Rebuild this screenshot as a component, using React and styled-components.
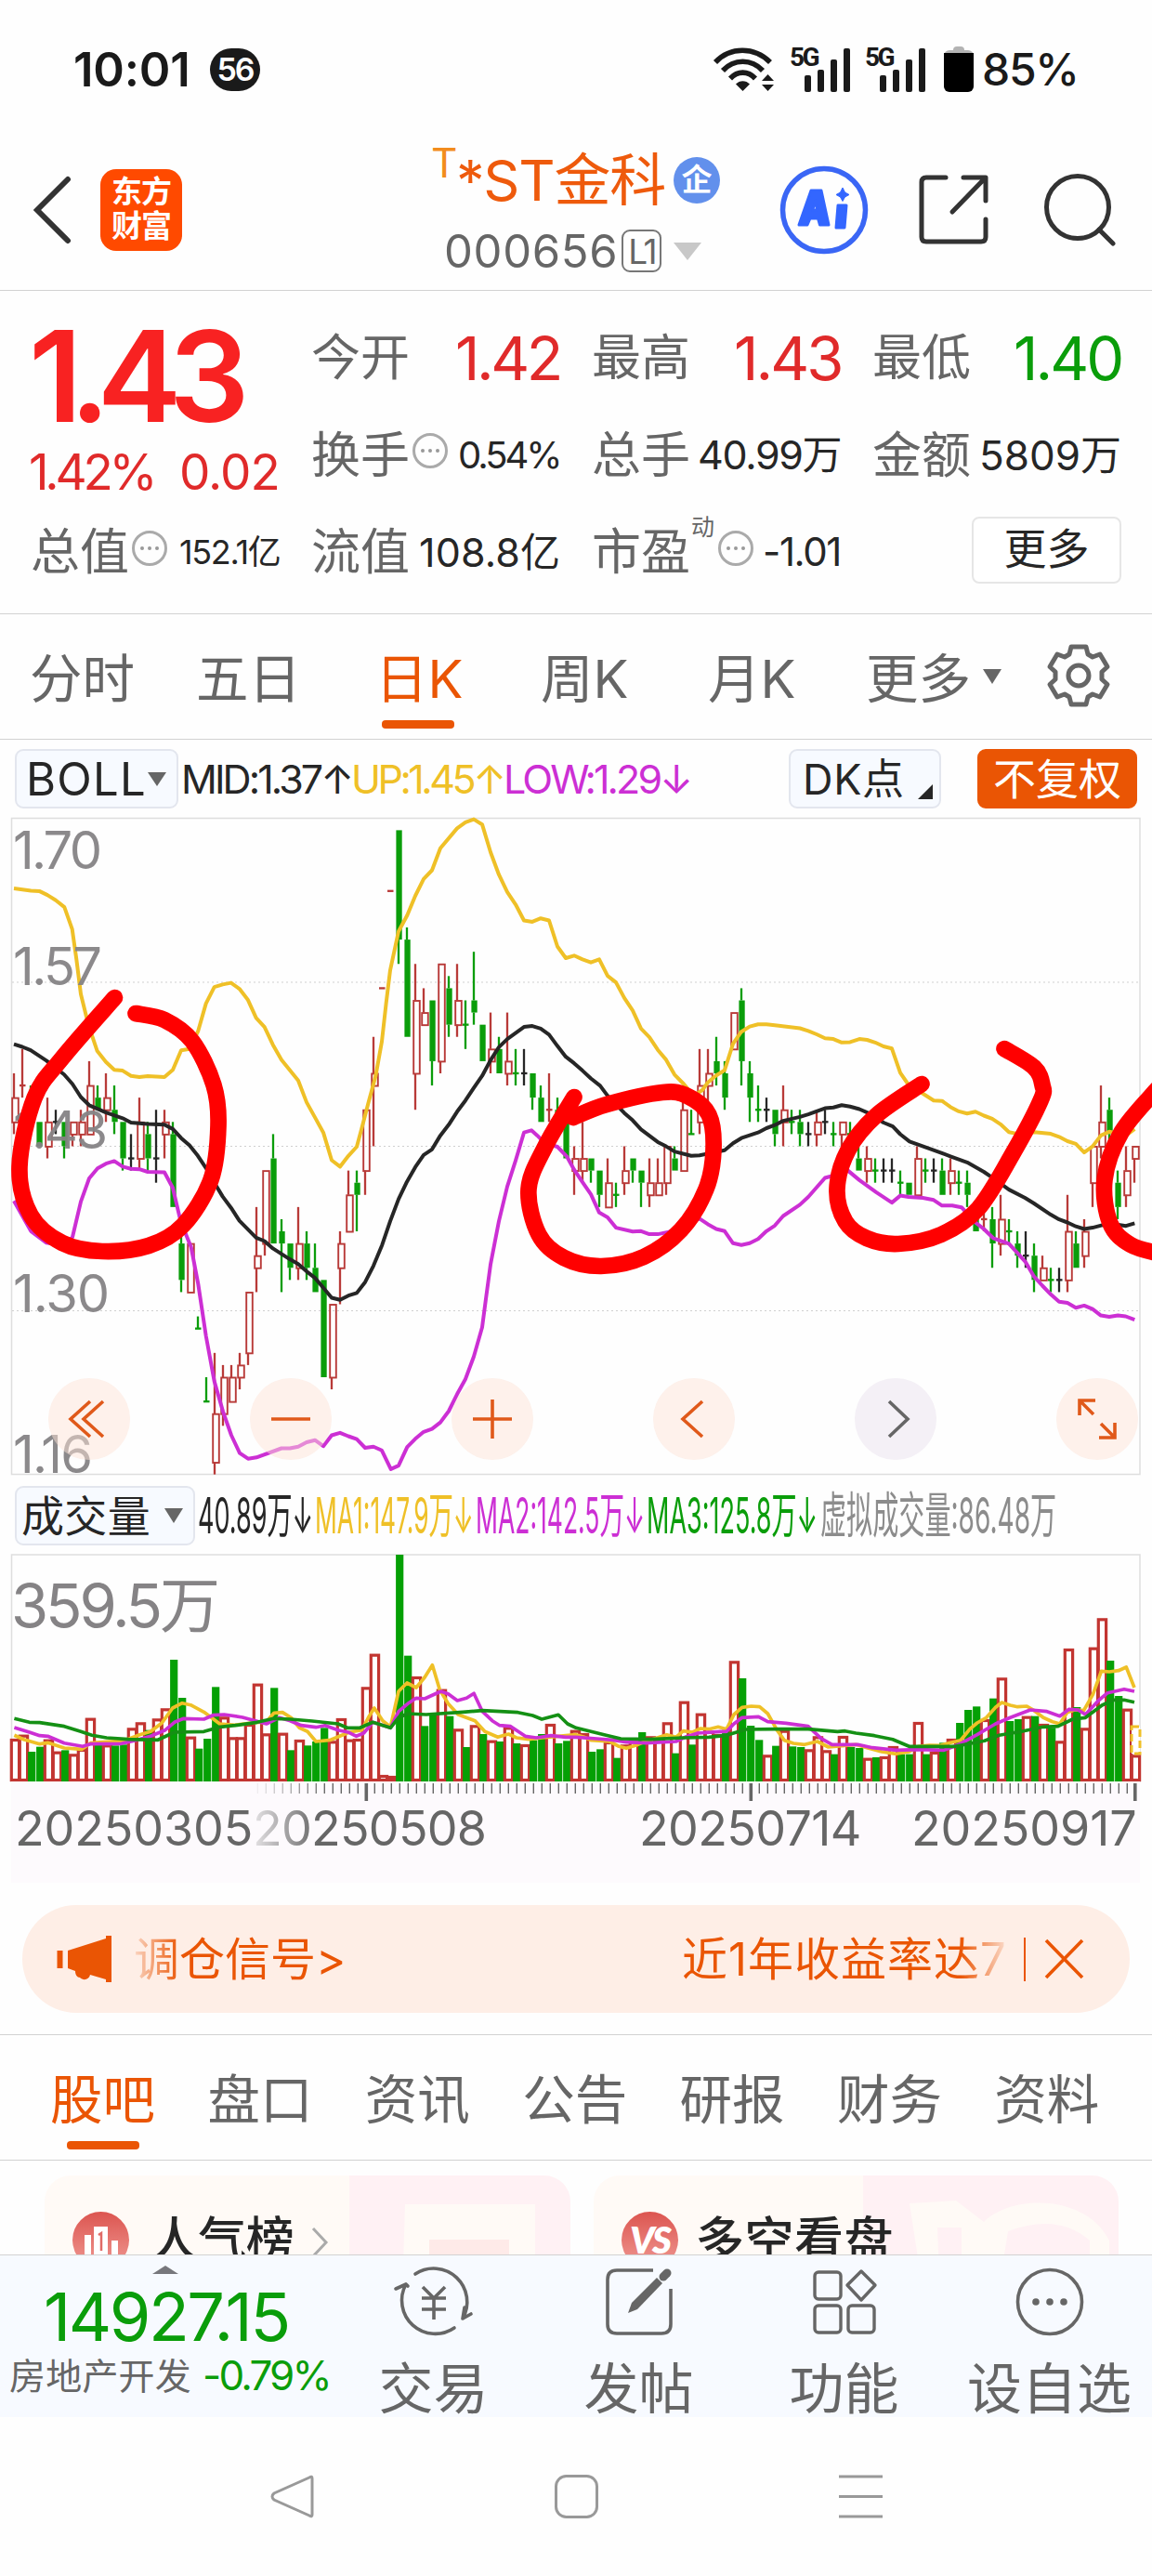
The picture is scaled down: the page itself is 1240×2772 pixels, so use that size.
import React, { useLayoutEffect, useRef, useState } from 'react';
import styled, { createGlobalStyle } from 'styled-components';

const FONT = `Inter, "Noto Sans CJK SC", sans-serif`;

const ORANGE = '#ea5504';
const RED = '#c23531';
const GREEN = '#0a9d0a';
const YELLOW = '#efc027';
const PURPLE = '#cc2fd4';
const INK = '#262626';
const GREY = '#666666';

const GlobalStyle = createGlobalStyle`
    * { box-sizing: border-box; }
    body {
        margin: 0;
        background: #fff;
        font-family: ${FONT};
        color: ${INK};
    }
    svg { display: block; flex-shrink: 0; overflow: visible; }
`;

const Page = styled.div`
    width: 1240px;
    height: 2772px;
    overflow: hidden;
    background: #fefefe;
    display: flex;
    flex-direction: column;
`;

/* ---------- text ---------- */

const TextBox = styled.span`
    display: inline-block;
    flex-shrink: 0;
    width: ${(p) => p.$w}px;
    margin-left: ${(p) => p.$ml || 0}px;
    font-size: ${(p) => p.$size}px;
    font-weight: ${(p) => p.$weight || 400};
    line-height: 1;
    color: ${(p) => p.$color || 'inherit'};
    white-space: pre;
`;

const TextInner = styled.span`
    display: inline-block;
    transform-origin: left center;
`;

// fits a string to a fixed width: tightens the tracking, or squeezes the glyphs
function Fit({ w, ml, size, weight, color, squeeze, children }) {
    const ref = useRef(null);
    const [fit, setFit] = useState({});

    useLayoutEffect(() => {
        const natural = ref.current.offsetWidth;
        if (squeeze) setFit({ transform: `scaleX(${w / natural})` });
        else setFit({ letterSpacing: `${(w - natural) / String(children).length}px` });
    }, []);

    return (
        <TextBox $w={w} $ml={ml} $size={size} $weight={weight} $color={color}>
            <TextInner ref={ref} style={fit}>{children}</TextInner>
        </TextBox>
    );
}

const Triangle = styled.i`
    flex-shrink: 0;
    margin-left: ${(p) => p.$ml || 0}px;
    border-left: ${(p) => p.$half}px solid transparent;
    border-right: ${(p) => p.$half}px solid transparent;
    border-top: ${(p) => p.$h}px solid ${(p) => p.$color};
`;

/* ---------- status bar ---------- */

const StatusBar = styled.div`
    height: 125px;
    padding: 24px 0 0 79px;
    display: flex;
    align-items: center;
    color: #1a1a1a;
    flex-shrink: 0;
`;

const CountBadge = styled.div`
    width: 54px;
    height: 46px;
    margin-left: 21px;
    border-radius: 23px;
    background: #1a1a1a;
    color: #fff;
    font-size: 34px;
    font-weight: 600;
    letter-spacing: -2px;
    line-height: 46px;
    text-align: center;
`;

const StatusIcons = styled.div`
    display: flex;
    align-items: center;
    margin-left: 488px;
`;

const Signal = styled.div`
    position: relative;
    width: 65px;
    height: 49px;
    margin-left: ${(p) => p.$ml}px;
    display: flex;
    align-items: flex-end;
    justify-content: flex-end;
    gap: 7px;
`;

const SignalTag = styled.span`
    position: absolute;
    left: 0;
    top: -2px;
    font-family: Roboto, sans-serif;
    font-size: 28px;
    font-weight: 700;
    line-height: 28px;
    letter-spacing: -2.5px;
`;

const SignalBar = styled.i`
    width: 7px;
    height: ${(p) => p.$h}px;
    border-radius: 2px;
    background: #1a1a1a;
`;

function SignalIcon({ ml }) {
    return (
        <Signal $ml={ml}>
            <SignalTag>5G</SignalTag>
            {[18, 24, 35, 47].map((h) => <SignalBar key={h} $h={h} />)}
        </Signal>
    );
}

function WifiIcon() {
    return (
        <svg width="66" height="48" viewBox="0 0 66 48" fill="none" stroke="#1a1a1a" strokeWidth="5.6">
            <path d="M2 16 C18 -1 44 -1 61 16" />
            <path d="M10 25 C22 12 41 12 53 25" />
            <path d="M18 33.500 C26 25 37 25 45 33.500" />
            <path d="M31.500 47 L24 39.500 C28 35 35 35 39 39.500 Z" fill="#1a1a1a" stroke="none" />
            <path d="M58.500 29 L65 36 H52 Z M58.500 47 L65 40 H52 Z" fill="#1a1a1a" stroke="none" />
        </svg>
    );
}

function BatteryIcon() {
    return (
        <svg width="32" height="50" viewBox="0 0 32 50">
            <rect x="10" y="0" width="12" height="8" rx="4" fill="#b3b3b3" />
            <rect x="0" y="4" width="32" height="18" rx="6" fill="#b3b3b3" />
            <path d="M0 7 H32 V43 a6 6 0 0 1 -6 6 H6 a6 6 0 0 1 -6 -6 Z" fill="#000" />
        </svg>
    );
}

const BatteryWrap = styled.div`
    margin: 0 9px 0 20px;
`;

/* ---------- header ---------- */

const Header = styled.header`
    height: 188px;
    padding: 14px 0 0 36px;
    border-bottom: 1px solid #d2d2d2;
    display: flex;
    align-items: center;
    flex-shrink: 0;
`;

const AppBadge = styled.div`
    width: 88px;
    height: 88px;
    margin-left: 33px;
    border-radius: 17px;
    background: #ff4a00;
    color: #fff;
    font-size: 33px;
    font-weight: 600;
    line-height: 37px;
    padding-top: 6px;
    letter-spacing: -1px;
    text-align: center;
`;

const TitleBlock = styled.div`
    width: 312px;
    height: 173px;
    margin-left: 268px;
    padding-top: 17px;
`;

const TitleRow = styled.div`
    height: 76px;
    display: flex;
    align-items: center;
`;

const TitleMark = styled.sup`
    width: 27px;
    font-size: 44px;
    line-height: 44px;
    color: #f28c1e;
    align-self: flex-start;
    margin-top: -3px;
`;

const CompanyTag = styled.div`
    width: 50px;
    height: 50px;
    margin-left: 9px;
    border-radius: 25px;
    background: #6290ec;
    color: #fff;
    font-size: 33px;
    font-weight: 700;
    line-height: 49px;
    text-align: center;
`;

const CodeRow = styled(TitleRow)`
    padding-left: 12px;
    color: ${GREY};
`;

const LevelTag = styled.div`
    width: 43px;
    height: 46px;
    margin-left: 4px;
    border: 2px solid #777;
    border-radius: 9px;
    font-size: 37px;
    line-height: 43px;
    letter-spacing: -3px;
    text-align: center;
`;

const HeaderIcons = styled.div`
    display: flex;
    align-items: center;
    gap: 54px;
    margin-left: 63px;

    svg:last-child { margin-left: 5px; }
`;

function AiIcon() {
    return (
        <svg width="96" height="96" viewBox="0 0 96 96">
            <circle cx="48" cy="48" r="44.500" fill="none" stroke="#3a66f5" strokeWidth="5.500" />
            <g fill="#3366ff" stroke="#3366ff" strokeWidth="3" strokeLinejoin="round">
                <path fillRule="evenodd" d="M34 27 H45 L53 64 H43.500 L41.500 57 H33 L30 64 H21 Z M39 38 L35.500 48 H40.500 Z" />
                <path d="M63 43 H72 L70 67 H61 Z" />
                <path d="M68 24 L70.500 29 L75 31.500 L70.500 34 L68 38.500 L65.500 34 L61 31.500 L65.500 29 Z" strokeWidth="1" />
            </g>
        </svg>
    );
}

function ShareIcon() {
    return (
        <svg width="76" height="76" viewBox="0 0 76 76" fill="none" stroke="#333" strokeWidth="5" strokeLinecap="round" strokeLinejoin="round">
            <path d="M29 3 H8 Q3 3 3 8 V67 Q3 72 8 72 H67 Q72 72 72 67 V48" />
            <path d="M48 3 H72 V28 M71 4 L36 40" />
        </svg>
    );
}

function SearchIcon() {
    return (
        <svg width="78" height="78" viewBox="0 0 78 78" fill="none" stroke="#333" strokeWidth="5" strokeLinecap="round">
            <circle cx="36" cy="36" r="33.500" />
            <path d="M59 60 L74 75" />
        </svg>
    );
}

/* ---------- quote ---------- */

const Quote = styled.section`
    height: 348px;
    padding: 20px 0 0 33px;
    border-bottom: 1px solid #d2d2d2;
    display: grid;
    grid-template-columns: repeat(4, 268px);
    grid-template-rows: repeat(3, 104.5px);
    column-gap: 34px;
    flex-shrink: 0;
`;

const PriceCell = styled.div`
    grid-row: span 2;
    color: #f82222;
`;

const PriceRow = styled.div`
    height: ${(p) => p.$h}px;
    display: flex;
    align-items: center;
`;

const Cell = styled.div`
    display: flex;
    align-items: center;
    justify-content: space-between;
    color: ${GREY};
`;

const CellLabel = styled.div`
    display: flex;
    align-items: center;
    font-size: 53px;
    line-height: 64px;
`;

const CellNote = styled.sup`
    font-size: 25px;
    line-height: 25px;
    margin: -54px 0 0 1px;
`;

const InfoDot = styled.i`
    width: 38px;
    height: 38px;
    margin: -9px 0 0 ${(p) => p.$ml}px;
    border: 3px solid #aaa;
    border-radius: 19px;
    display: flex;
    align-items: center;
    justify-content: center;
    gap: 4px;

    &::before, &::after, span {
        content: '';
        width: 4px;
        height: 4px;
        border-radius: 2px;
        background: #999;
    }
`;

const MoreButton = styled.button`
    justify-self: end;
    align-self: center;
    width: 161px;
    height: 72px;
    margin-top: -4px;
    border: 2px solid #e6e6e6;
    border-radius: 8px;
    background: #fff;
    color: ${INK};
    font: 400 46px/60px ${FONT};
    padding: 0 0 4px;
`;

const QUOTE_CELLS = [
    { label: '今开', value: '1.42', w: 113, size: 65, color: '#e02a2a' },
    { label: '最高', value: '1.43', w: 115, size: 65, color: '#e02a2a' },
    { label: '最低', value: '1.40', w: 116, size: 65, color: GREEN },
    { label: '换手', value: '0.54%', w: 110, size: 40, dot: true },
    { label: '总手', value: '40.99万', w: 154, size: 43 },
    { label: '金额', value: '5809万', w: 153, size: 44 },
    { label: '总值', value: '152.1亿', w: 108, size: 36, dot: true },
    { label: '流值', value: '108.8亿', w: 152, size: 43 },
    { label: '市盈', value: '-1.01', w: 84, size: 42, dot: true, note: '动' },
];

function QuotePanel() {
    return (
        <Quote>
            <PriceCell>
                <PriceRow $h={144}><Fit w={224} ml={-2} size={136} weight={600}>1.43</Fit></PriceRow>
                <PriceRow $h={62}>
                    <Fit w={134} ml={-2} size={53} color="#e02a2a">1.42%</Fit>
                    <Fit w={108} ml={28} size={53} color="#e02a2a">0.02</Fit>
                </PriceRow>
            </PriceCell>
            {QUOTE_CELLS.map((c) => (
                <Cell key={c.label}>
                    <CellLabel>
                        {c.label}
                        {c.note && <CellNote>{c.note}</CellNote>}
                        {c.dot && <InfoDot $ml={c.note ? 4 : 3}><span /></InfoDot>}
                    </CellLabel>
                    <Fit w={c.w} size={c.size} color={c.color || INK}>{c.value}</Fit>
                </Cell>
            ))}
            <MoreButton>更多</MoreButton>
        </Quote>
    );
}

/* ---------- period tabs ---------- */

const PeriodTabs = styled.nav`
    height: 135px;
    border-bottom: 1px solid #d2d2d2;
    padding-left: 32px;
    display: flex;
    align-items: center;
    flex-shrink: 0;
`;

const Period = styled.div`
    position: relative;
    height: 134px;
    width: ${(p) => p.$w}px;
    font-size: 56.5px;
    line-height: 140px;
    white-space: nowrap;
    color: ${(p) => (p.$active ? ORANGE : GREY)};
`;

const Underline = styled.i`
    position: absolute;
    left: ${(p) => p.$left}px;
    bottom: 11px;
    width: 78px;
    height: 9px;
    border-radius: 4px;
    background: ${ORANGE};
`;

const PERIODS = [
    ['分时', 179],
    ['五日', 193],
    ['日K', 178],
    ['周K', 180],
    ['月K', 170],
    ['更多', 126],
];

function GearIcon() {
    return (
        <svg width="68" height="68" viewBox="-34 -34 68 68" fill="none" stroke={GREY} strokeWidth="5" strokeLinejoin="round">
            <path d="M-8 -31 H8 L10 -23 L15 -20 L23 -23 L31 -9.500 L25 -4 V4 L31 9.500 L23 23 L15 20 L10 23 L8 31 H-8 L-10 23 L-15 20 L-23 23 L-31 9.500 L-25 4 V-4 L-31 -9.500 L-23 -23 L-15 -20 L-10 -23 Z" />
            <circle r="11" />
        </svg>
    );
}

const GearWrap = styled.div`
    margin: -2px 0 0 49px;
`;

/* ---------- indicator rows ---------- */

const IndicatorRow = styled.div`
    height: ${(p) => p.$h}px;
    padding: ${(p) => p.$pad};
    display: flex;
    align-items: center;
    flex-shrink: 0;
`;

const Chip = styled.div`
    position: relative;
    width: ${(p) => p.$w}px;
    height: 64px;
    margin-left: ${(p) => p.$ml || 0}px;
    padding-left: ${(p) => p.$pl}px;
    border: 2px solid ${(p) => (p.$solid ? ORANGE : '#e3e6ee')};
    border-radius: 9px;
    background: ${(p) => (p.$solid ? ORANGE : '#f7faff')};
    color: ${(p) => (p.$solid ? '#fff' : INK)};
    display: flex;
    align-items: center;
    flex-shrink: 0;
`;

const ChipCorner = styled.i`
    position: absolute;
    right: 7px;
    bottom: 8px;
    border-left: 16px solid transparent;
    border-bottom: 16px solid ${INK};
`;

/* ---------- price chart ---------- */

// one entry per day: colour, high, body top, body bottom, low, in cents below 1.70
const CANDLES = `r21,23,25,26 r19,22,22,23 g22,23,25,25 g25,25,27,27 r23,25,27,28 k24,25,25,26 g25,25,27,28 r25,25,26,27 r24,25,26,27
r20,22,26,26 g22,23,24,24 r21,23,24,25 g22,24,25,26 g25,25,28,29 k26,28,28,29 r23,25,28,29 g25,26,28,29 k24,28,28,30
r24,25,26,28 g25,26,32,32 g34,35,38,39 r35,35,39,39 g41,42,42,42 g46,48,48,48 r44,49,53,54 r45,46,49,50 r45,46,48,48
r44,45,46,47 r39,39,44,45 r32,36,37,39 r29,29,35,36 g26,28,35,35 g33,34,35,39 g35,35,37,38 r32,35,37,38 g34,35,37,38
g35,37,39,39 g38,38,46,46 r40,40,46,47 r34,35,37,40 r29,31,34,34 g29,30,31,34 r24,24,29,31 r18,21,22,27 r14,14,14,14
r6,6,6,6 g1,1,10,12 g9,10,18,18 r12,15,21,24 r14,16,17,17 g15,15,20,22 r12,12,20,21 g13,14,17,18 r12,15,17,18
g15,17,17,19 g11,15,16,17 g17,17,20,20 r16,19,20,21 g18,19,21,21 r16,20,21,22 g19,21,21,22 k19,21,21,22 g21,21,23,24
g22,23,25,25 r21,24,24,25 g23,24,25,25 g25,25,28,28 r27,28,29,31 r25,28,29,30 g28,28,29,30 g29,29,31,32 r28,30,32,32
g30,31,31,32 r27,29,30,31 g28,28,29,30 g29,29,30,32 r28,30,31,32 r28,30,31,31 r27,27,30,31 g27,28,29,29 r22,24,29,29
g24,26,26,26 r19,22,25,26 r19,21,22,24 g18,20,21,22 g20,21,23,24 r16,16,19,19 g14,15,20,22 g20,21,23,25 g22,24,24,25
k23,24,24,25 g24,24,26,27 r22,24,25,27 g24,25,25,26 g24,25,26,27 k25,26,26,27 r24,25,26,27 k24,25,25,26 g25,26,26,27
r25,25,26,27 g25,26,26,27 g27,28,29,29 r27,28,29,30 g28,29,29,30 k28,29,29,30 k28,29,29,30 g29,30,30,31 g30,30,31,31
r27,28,31,31 g28,29,29,30 k28,29,29,30 g28,29,31,31 r28,29,30,31 g29,30,30,31 g29,30,31,32 g33,33,34,34 r32,33,33,34
g32,33,35,37 r31,33,35,36 g33,34,34,35 g34,35,36,37 k34,36,36,37 g35,36,38,39 r36,37,38,38 g37,38,38,39 k37,38,38,39
r31,34,38,39 g34,35,37,37 r33,34,36,37 r27,27,30,32 r22,25,27,28 g23,24,26,28 g29,30,32,33 r27,29,31,32 r27,27,28,30`
    .split(/\s+/)
    .map((d) => [d[0], ...d.slice(1).split(',').map(Number)]);

const UP = '45,186 100,191 127,192 153,201 180,213 208,229 233,280 247,350 261,430 285,500 314,562 342,587 369,605 396,607 423,619 450,622 477,620 531,622 558,605 585,560 612,557 640,515 665,452 692,414 719,408 746,404 773,418 800,443 827,485 854,506 881,547 909,582 963,630 990,680 1017,715 1044,750 1071,814 1098,829 1125,804 1152,783 1170,735 1190,680 1213,620 1233,540 1247,450 1260,375 1287,285 1315,248 1341,203 1368,164 1395,144 1422,93 1476,47 1503,33 1530,26 1557,38 1584,102 1611,154 1638,194 1665,223 1692,260 1719,263 1746,255 1773,260 1800,320 1827,347 1854,341 1881,350 1908,357 1935,350 1962,388 1989,403 2016,439 2043,468 2070,510 2097,530 2124,559 2151,582 2178,616 2208,638 2240,665 2268,652 2286,634 2313,618 2340,606 2367,545 2394,517 2421,505 2448,500 2475,500 2502,502 2583,509 2610,515 2637,523 2664,532 2691,534 2718,542 2745,541 2775,534 2800,536 2826,542 2853,551 2880,556 2907,612 2934,640 2975,658 3015,676 3042,677 3069,691 3096,701 3123,706 3150,702 3177,711 3204,718 3231,731 3258,749 3285,753 3340,749 3393,753 3420,760 3447,770 3474,776 3501,796 3528,782 3555,757 3582,748 3610,752 3640,755 3664,742';
const MID = '45,546 72,552 99,560 150,584 207,616 234,638 261,668 288,687 342,704 396,717 423,727 477,730 531,732 558,742 585,763 612,780 639,804 666,833 692,866 719,898 746,924 773,954 827,993 854,1001 881,1018 936,1043 963,1054 990,1071 1017,1086 1044,1109 1071,1132 1098,1137 1125,1127 1152,1121 1179,1096 1206,1058 1234,1010 1260,955 1287,904 1314,864 1341,830 1368,802 1395,789 1422,757 1449,732 1476,702 1503,676 1530,647 1557,619 1584,583 1611,553 1638,534 1665,520 1692,506 1719,504 1746,510 1773,524 1800,550 1827,575 1854,590 1881,607 1908,625 1938,642 1962,665 2016,705 2043,722 2070,743 2124,772 2151,782 2178,794 2232,804 2259,803 2340,791 2367,775 2394,763 2448,750 2475,740 2502,733 2529,723 2583,714 2610,708 2664,694 2691,692 2718,687 2745,690 2775,696 2810,707 2853,727 2883,736 2907,754 2937,771 3000,787 3069,805 3123,819 3177,841 3204,854 3258,882 3310,901 3339,914 3393,940 3420,951 3447,958 3474,967 3501,973 3528,970 3582,960 3636,966 3664,960';
const LOW = '45,908 70,940 100,978 150,1005 210,1012 234,992 261,910 288,856 315,833 342,822 369,816 396,829 423,834 450,835 477,841 531,842 558,878 580,945 600,985 617,1015 640,1100 665,1220 692,1325 720,1395 747,1450 774,1491 801,1504 828,1501 909,1480 936,1480 963,1476 990,1466 1017,1461 1044,1475 1071,1450 1098,1444 1125,1452 1152,1459 1179,1479 1206,1476 1233,1485 1262,1528 1287,1520 1315,1477 1341,1458 1368,1442 1395,1435 1422,1420 1449,1394 1476,1355 1503,1320 1530,1268 1557,1200 1570,1130 1584,1055 1611,955 1638,875 1665,815 1692,750 1716,745 1735,757 1760,775 1800,783 1830,805 1854,836 1881,865 1908,893 1935,935 1962,946 1989,970 2043,979 2070,978 2097,985 2124,985 2160,980 2210,965 2259,949 2286,962 2313,973 2340,978 2367,1006 2394,1010 2421,1006 2448,996 2475,978 2502,965 2529,943 2583,917 2610,899 2637,877 2664,855 2700,848 2738,838 2775,860 2829,888 2880,912 2907,896 2934,899 2980,901 3015,906 3042,919 3075,919 3105,923 3145,955 3177,973 3207,994 3258,1007 3285,1028 3312,1050 3339,1083 3366,1104 3393,1124 3420,1141 3447,1144 3474,1155 3501,1150 3528,1158 3555,1173 3582,1176 3610,1173 3635,1175 3664,1183';

// hand drawn marks over the chart
const MARKS = [
    '123.5,204 67,269 37,312 21,386 33,438 67,468 110,477 160,471 197,449 227,400 235,342 230,298 207,251 177,228 146,221',
    '618,311 587,364 569,410 580,459 607,484 647,493 693,483 733,454 760,410 768,368 763,330 740,310 713,306 653,319 617,333',
    '992,297 943,331 913,368 901,410 910,445 933,463 967,469 1013,459 1053,431 1090,372 1120,315 1122,298 1113,279 1081,259',
    '1246,302 1207,349 1189,400 1195,447 1217,470 1250,480',
];

const parse = (s) => s.split(' ').map((p) => p.split(',').map(Number));
const scaled = (s, kx, ky) => parse(s).map(([x, y]) => `${(x / kx).toFixed(1)},${(y / ky).toFixed(1)}`).join(' ');

function smooth(s) {
    const p = parse(s);
    let d = `M${p[0]}`;
    for (let i = 0; i < p.length - 1; i++) {
        const a = p[i - 1] || p[i];
        const b = p[i];
        const c = p[i + 1];
        const e = p[i + 2] || c;
        d += ` C${b[0] + (c[0] - a[0]) / 6},${b[1] + (c[1] - a[1]) / 6} ${c[0] - (e[0] - b[0]) / 6},${c[1] - (e[1] - b[1]) / 6} ${c}`;
    }
    return d;
}

const TONE = { r: '#b83a38', g: GREEN, k: INK };
const priceY = (n) => 10.8 + n * 13.08;

function Candle({ i, data }) {
    const [kind, high, top, bottom, low] = data;
    const x = 15 + i * 9;
    const color = TONE[kind];
    const yt = priceY(top);
    const yb = priceY(bottom);
    return (
        <g stroke={color} strokeWidth="2.300" fill="none">
            {high < top && <path d={`M${x} ${priceY(high)} V${yt}`} />}
            {low > bottom && <path d={`M${x} ${yb} V${priceY(low)}`} />}
            {top === bottom && <path d={`M${x - 3} ${yt} H${x + 3.5}`} />}
            {top !== bottom && kind === 'g' && <rect x={x - 2.6} y={yt} width="6.300" height={yb - yt} fill={color} stroke="none" />}
            {top !== bottom && kind === 'r' && <rect x={x - 1.8} y={yt + 0.5} width="6.600" height={yb - yt} strokeWidth="1.9" />}
        </g>
    );
}

const ChartArea = styled.div`
    position: relative;
    height: 707px;
    flex-shrink: 0;
`;

const ChartControls = styled.div`
    position: absolute;
    left: 52px;
    right: 15px;
    top: 603px;
    display: flex;
    justify-content: space-between;
`;

const RoundButton = styled.div`
    width: 88px;
    height: 88px;
    border-radius: 44px;
    background: ${(p) => (p.$muted ? 'rgba(235, 228, 238, 0.55)' : 'rgba(253, 228, 216, 0.5)')};
    display: flex;
    align-items: center;
    justify-content: center;
`;

const CONTROLS = [
    'M1 -19 L-20 0 L1 19 M15 -19 L-6 0 L15 19',
    'M-21 0 H21',
    'M-21 0 H21 M0 -21 V21',
    'M9 -19 L-12 0 L9 19',
    'M-7 -19 L13 0 L-7 19',
    'M-19 -4 V-20 H-2 M-19 -20 L-4 -5 M19 4 V20 H2 M19 20 L4 5',
];

const LABELS = [
    ['1.70', 16, 65, 92],
    ['1.57', 16, 190, 92],
    ['1.43', 16, 366, 98],
    ['1.30', 16, 542, 100],
    ['1.16', 16, 715, 82],
];

function PriceChart() {
    return (
        <ChartArea>
            <svg width="1240" height="707" viewBox="0 10.500 1240 707">
                <rect x="12.500" y="11" width="1214.500" height="706" fill="none" stroke="#dedede" strokeWidth="1.5" />
                {[187.5, 364, 541].map((y) => (
                    <path key={y} d={`M13 ${y} H1227`} stroke="#cfcfcf" strokeDasharray="2 3" />
                ))}
                {CANDLES.map((c, i) => <Candle key={i} i={i} data={c} />)}
                <g fill="none" strokeWidth="4" strokeLinejoin="round">
                    <polyline points={scaled(UP, 3, 2.148)} stroke={YELLOW} />
                    <polyline points={scaled(MID, 3, 2.148)} stroke={INK} />
                    <polyline points={scaled(LOW, 3, 2.148)} stroke={PURPLE} />
                </g>
                <g fill="#858385" fillOpacity="0.95" fontFamily={FONT} fontSize="56">
                    {LABELS.map(([text, x, y, w]) => (
                        <text key={text} x={x - 2} y={y} textLength={w + 4}>{text}</text>
                    ))}
                </g>
                <g fill="none" stroke="#ff0000" strokeWidth="17.700" strokeLinecap="round" strokeLinejoin="round">
                    {MARKS.map((m) => <path key={m} d={smooth(m)} />)}
                </g>
            </svg>
            <ChartControls>
                {CONTROLS.map((d, i) => (
                    <RoundButton key={d} $muted={i === 4}>
                        <svg width="44" height="44" viewBox="-22 -22 44 44" fill="none" stroke={i === 4 ? GREY : '#e0591a'} strokeWidth="3.600">
                            <path d={d} />
                        </svg>
                    </RoundButton>
                ))}
            </ChartControls>
        </ChartArea>
    );
}

/* ---------- volume chart ---------- */

const VOLUMES = `r843 r830 g885 g869 r845 r884 g880 r892 r876 r776 g858 r862 g865 g862 r808 r790 g815 r778 r745 g588 g711 r836 g875 g843 g676
r772 r838 r838 r795 r665 r826 g679 r824 g880 r846 g865 g852 g808 r850 r777 r845 r843 r676 r569 r960 r963 g249 g575 r642 g802
g765 r683 g770 r811 g870 r799 g828 r848 g852 r805 g858 r861 g848 g828 r795 g858 g850 r815 r825 g885 g877 r852 g905 r862 r850
g822 r835 r848 r790 g890 r722 g862 r761 r818 r828 g815 r592 g648 g801 g847 r895 g866 r815 g868 g870 r877 r835 r880 g893 r834
g870 g873 r905 g903 r900 r867 g893 g893 r789 g893 r885 g856 r843 g792 g750 g739 r780 g713 r646 g786 g780 r770 g770 r795 g808
r850 r552 g741 r808 r548 r454 g591 g705 r746 r895`
    .split(/\s+/)
    .map((d) => [d[0], Number(d.slice(1)) / 3]);

const MA1 = '39,832 64,845 108,860 130,856 175,873 223,877 246,857 291,853 337,850 380,830 410,820 440,793 470,744 496,728 519,734 555,757 598,795 640,799 700,790 724,790 746,760 769,758 792,775 815,808 837,820 860,852 900,847 951,822 985,815 1005,770 1019,744 1042,785 1063,805 1085,690 1108,663 1133,678 1156,645 1177,605 1197,685 1220,730 1247,765 1293,785 1320,820 1355,838 1384,828 1406,840 1440,845 1475,840 1520,835 1568,830 1590,838 1610,848 1660,852 1685,868 1705,874 1730,865 1750,855 1815,830 1840,838 1860,818 1885,822 1907,810 1930,812 1955,805 1978,812 1998,765 2020,742 2045,738 2068,740 2090,762 2115,815 2135,848 2160,858 2190,862 2225,852 2255,870 2300,865 2330,862 2360,872 2400,885 2440,892 2475,885 2500,868 2530,864 2560,865 2590,855 2615,848 2640,812 2660,792 2685,775 2710,742 2727,726 2750,735 2770,740 2795,738 2815,752 2840,775 2865,788 2885,795 2905,758 2925,750 2950,752 2975,700 2998,625 3020,627 3045,623 3066,612 3088,678';
const MA2 = '39,807 80,822 108,833 130,835 175,857 225,868 246,860 330,859 365,850 410,835 450,815 475,790 500,778 555,780 580,767 610,765 660,774 700,787 725,795 760,775 790,785 820,800 860,806 885,800 920,815 950,823 970,835 990,825 1015,790 1063,808 1085,755 1110,730 1133,712 1156,714 1200,690 1220,698 1245,720 1270,712 1290,697 1313,755 1340,785 1360,800 1390,803 1430,835 1460,840 1500,833 1540,838 1568,838 1625,843 1668,847 1705,854 1760,857 1840,852 1865,838 1900,825 1960,820 1978,820 1998,795 2020,775 2065,772 2090,788 2140,793 2200,803 2235,842 2265,862 2335,862 2375,872 2440,880 2500,878 2570,880 2610,862 2660,830 2710,795 2750,775 2805,750 2850,755 2885,770 2910,748 2935,750 2955,765 2990,720 3015,695 3060,683 3088,690';
const MA3 = '39,778 80,790 108,791 175,803 220,820 250,832 290,840 350,845 430,847 475,822 555,820 600,805 640,800 700,790 745,778 790,780 850,786 920,795 945,808 980,808 1015,790 1063,808 1085,775 1110,762 1160,765 1260,757 1313,752 1410,758 1450,768 1475,780 1520,766 1545,795 1568,808 1650,832 1690,843 1770,845 1860,840 1930,838 1978,832 2030,813 2110,812 2200,812 2280,820 2300,818 2330,825 2380,833 2430,845 2475,868 2600,868 2680,850 2720,832 2780,820 2840,805 2880,803 2920,780 2955,775 3000,735 3030,718 3060,718 3088,725';

const VolumeArea = styled.div`
    height: 244px;
    flex-shrink: 0;
`;

function VolumeBar({ i, kind, top }) {
    const x = 16.3 + i * 9;
    const h = 327 - top;
    if (kind === 'g') return <rect x={x - 4.2} y={top} width="8.200" height={h} fill="#05a005" />;
    return <rect x={x - 4} y={top + 1.5} width="8.300" height={Math.max(h - 3, 2)} fill="#fff" stroke={RED} strokeWidth="3.2" />;
}

function VolumeChart() {
    return (
        <VolumeArea>
            <svg width="1240" height="244" viewBox="0 83 1240 244">
                <rect x="12.500" y="83" width="1214.500" height="244" fill="none" stroke="#dedede" strokeWidth="1.5" />
                {VOLUMES.map(([kind, top], i) => <VolumeBar key={i} i={i} kind={kind} top={top} />)}
                <rect x="1218" y="268" width="9" height="29" fill="#fff" stroke={YELLOW} strokeWidth="3" strokeDasharray="8 4" />
                <g fill="none" strokeWidth="3.700" strokeLinejoin="round">
                    <polyline points={scaled(MA1, 2.529, 3)} stroke={YELLOW} />
                    <polyline points={scaled(MA2, 2.529, 3)} stroke={PURPLE} />
                    <polyline points={scaled(MA3, 2.529, 3)} stroke="#149014" />
                </g>
                <text x="12" y="161" fill="#858385" fontFamily={FONT} fontSize="65" textLength="225">359.5万</text>
            </svg>
        </VolumeArea>
    );
}

const Axis = styled.div`
    height: 109px;
    margin: 0 13px 0 12px;
    background: #fdfafd;
    flex-shrink: 0;
`;

const Ticks = styled.svg`
    mask-image: linear-gradient(90deg, transparent 258px, #000 340px);
`;

const Dates = styled.div`
    display: flex;
    align-items: center;
    height: 62px;
    margin-top: -1px;
    color: ${GREY};
`;

const FadedDate = styled.div`
    display: flex;
    mask-image: linear-gradient(90deg, rgba(0, 0, 0, 0.15), #000 70px);
`;

function DateAxis() {
    return (
        <Axis>
            <Ticks width="1215" height="21" viewBox="12 0 1215 21">
                {VOLUMES.map((_, i) => {
                    const major = i === 42 || i === 88 || i === 134;
                    return i > 28 && (
                        <path key={i} d={`M${16.3 + i * 9 - (i === 134 ? 0.5 : 0)} 2 V${major ? 21 : 13}`} stroke={GREY} strokeWidth={major ? 3.6 : 1.4} />
                    );
                })}
            </Ticks>
            <Dates>
                <Fit w={256} ml={4} size={52}>20250305</Fit>
                <FadedDate><Fit w={251} size={52}>20250508</Fit></FadedDate>
                <Fit w={239} ml={165} size={52}>20250714</Fit>
                <Fit w={242} ml={54} size={52}>20250917</Fit>
            </Dates>
        </Axis>
    );
}

/* ---------- signal banner ---------- */

const Banner = styled.div`
    height: 116px;
    margin: 24px 24px 23px;
    padding-left: 37px;
    border-radius: 58px;
    background: #feeee6;
    color: ${ORANGE};
    display: flex;
    align-items: center;
    flex-shrink: 0;
`;

const FadeLeft = styled.div`
    display: flex;
    padding: 8px 0;
    margin-left: 23px;
    mask-image: linear-gradient(90deg, rgba(0, 0, 0, 0.15), #000 50px);
`;

const FadeRight = styled.div`
    display: flex;
    padding: 8px 0;
    margin-left: 362px;
    mask-image: linear-gradient(270deg, rgba(0, 0, 0, 0.1), #000 50px);
`;

const BannerDivider = styled.i`
    width: 1.5px;
    height: 47px;
    margin: 0 21px 0 18px;
    background: ${ORANGE};
`;

function SignalBanner() {
    return (
        <Banner>
            <svg width="60" height="52" viewBox="0 0 60 52" fill={ORANGE}>
                <path d="M0.500 17 H6.500 V36 H0.500 Z M12 17 L53 4 V1 H59 V51 H53 V48 L36 43 C35 48 29 50 25 46 C22 46 20 43 20 39 L12 36 Z" />
            </svg>
            <FadeLeft><Fit w={228} size={49}>调仓信号&gt;</Fit></FadeLeft>
            <FadeRight><Fit w={350} size={49}>近1年收益率达7</Fit></FadeRight>
            <BannerDivider />
            <svg width="41" height="42" viewBox="0 0 41 42" stroke={ORANGE} strokeWidth="3.600">
                <path d="M1 1 L40 41 M40 1 L1 41" />
            </svg>
        </Banner>
    );
}

/* ---------- content tabs and cards ---------- */

const ContentTabs = styled.nav`
    height: 136px;
    border-top: 1px solid #d2d2d2;
    border-bottom: 1px solid #d2d2d2;
    padding-left: 54px;
    display: grid;
    grid-template-columns: repeat(7, 169.4px);
    flex-shrink: 0;
`;

const ContentTab = styled(Period)`
    width: auto;
    line-height: 140px;
`;

const Cards = styled.div`
    height: 101px;
    padding: 16px 36px 0 48px;
    overflow: hidden;
    display: grid;
    grid-template-columns: 566px 565px;
    gap: 25px;
    flex-shrink: 0;
`;

const Card = styled.div`
    position: relative;
    height: 160px;
    padding: 39px 0 0 30px;
    border-radius: 28px;
    overflow: hidden;
    background: linear-gradient(90deg, #fffaf6 ${(p) => p.$split}px, #fff1f4 ${(p) => p.$split}px);
    display: flex;
    align-items: flex-start;
`;

const CardArt = styled.svg`
    position: absolute;
    left: 0;
    top: 0;
`;

const CardIcon = styled.div`
    position: relative;
    width: 61px;
    height: 61px;
    border-radius: 31px;
    background: linear-gradient(#dc5550, #f09a94);
    color: #fff;
    font: italic 800 40px/60px Lato, sans-serif;
    letter-spacing: -2px;
    text-align: center;
    flex-shrink: 0;
`;

const CardTitle = styled.div`
    position: relative;
    display: flex;
    margin: 5px 0 0 ${(p) => p.$ml}px;
`;

function RankIcon() {
    return (
        <svg width="61" height="61" viewBox="0 0 61 61">
            <path d="M13 25 H20 V60 H13 Z M23 16 H38 V60 H23 Z M42 31 H49 V60 H42 Z" fill="#fff" />
            <path d="M28 25 L31 23 V42" stroke="#e06a66" strokeWidth="2.500" fill="none" />
        </svg>
    );
}

/* ---------- bottom bar ---------- */

const BottomBar = styled.footer`
    height: 175px;
    border-top: 1.5px solid #d2d2d2;
    background: #f7faff;
    display: flex;
    flex-shrink: 0;
`;

const IndexBlock = styled.div`
    width: 356px;
    padding-top: 11px;
    display: flex;
    flex-direction: column;
    align-items: flex-start;
    flex-shrink: 0;
`;

const UpArrow = styled.i`
    margin-left: 164px;
    border-left: 14px solid transparent;
    border-right: 14px solid transparent;
    border-bottom: 9px solid #77777c;
`;

const IndexRow = styled.div`
    display: flex;
    align-items: center;
    height: ${(p) => p.$h}px;
    color: ${GREY};
`;

const NavItem = styled.div`
    width: 221px;
    padding-top: 10px;
    color: ${GREY};
    font-size: 59px;
    line-height: 107px;
    display: flex;
    flex-direction: column;
    align-items: center;
    white-space: nowrap;
    flex-shrink: 0;
`;

const navIcon = { width: 80, height: 80, viewBox: '-40 -40 80 80', fill: 'none', stroke: GREY, strokeWidth: 3.6 };

function TradeIcon() {
    return (
        <svg {...navIcon} strokeLinecap="round" strokeLinejoin="round">
            <path d="M-20 -30 A36 36 0 0 1 31 18 L40 13 M31 18 L33 6" />
            <path d="M22 28 A36 36 0 0 1 -30 -19 L-41 -14 M-30 -19 L-28 -17" />
            <path d="M-12 -16 L0 -4 L12 -16 M0 -4 V19 M-13 -4 H13 M-13 8 H13" strokeLinecap="butt" />
        </svg>
    );
}

function PostIcon() {
    return (
        <svg {...navIcon}>
            <path d="M15 -34 H-24 Q-34 -34 -34 -24 V24 Q-34 34 -24 34 H24 Q34 34 34 24 V-14" />
            <path d="M-12 12 L-8 1 L19 -26 L25 -20 L-2 8 Z" fill={GREY} stroke="none" />
            <path d="M26 -27 L30 -31" strokeWidth="9" strokeLinecap="round" />
        </svg>
    );
}

function GridIcon() {
    return (
        <svg {...navIcon} strokeWidth="3.400">
            <rect x="-32" y="-32" width="28" height="29" rx="4" />
            <rect x="-32" y="4" width="28" height="29" rx="4" />
            <rect x="4" y="4" width="28" height="29" rx="4" />
            <path d="M18 -33 L33 -18 L18 -2 L3 -18 Z" strokeLinejoin="round" />
        </svg>
    );
}

function DotsIcon() {
    return (
        <svg {...navIcon}>
            <circle r="34.500" />
            <g fill={GREY} stroke="none">
                <circle cx="-15" r="3.800" />
                <circle r="3.800" />
                <circle cx="15" r="3.800" />
            </g>
        </svg>
    );
}

const SystemNav = styled.div`
    height: 170px;
    padding-left: 291px;
    display: flex;
    align-items: center;
    gap: 259px;
    flex-shrink: 0;
`;

const systemIcon = { width: 47, height: 47, viewBox: '0 0 47 47', fill: 'none', stroke: '#999', strokeWidth: 3 };

export default function App() {
    return (
        <Page>
            <GlobalStyle />

            <StatusBar>
                <Fit w={126} size={51} weight={600}>10:01</Fit>
                <CountBadge>56</CountBadge>
                <StatusIcons>
                    <WifiIcon />
                    <SignalIcon ml={16} />
                    <SignalIcon ml={16} />
                    <BatteryWrap><BatteryIcon /></BatteryWrap>
                    <Fit w={104} size={48} weight={500}>85%</Fit>
                </StatusIcons>
            </StatusBar>

            <Header>
                <svg width="39" height="70" viewBox="0 0 39 70" fill="none" stroke="#333" strokeWidth="6">
                    <path d="M37 2 L4 35 L37 68" strokeLinecap="round" />
                </svg>
                <AppBadge>东方<br />财富</AppBadge>
                <TitleBlock>
                    <TitleRow>
                        <TitleMark>T</TitleMark>
                        <Fit w={225} size={61} color="#ee5a0c">*ST金科</Fit>
                        <CompanyTag>企</CompanyTag>
                    </TitleRow>
                    <CodeRow>
                        <Fit w={187} ml={2} size={49}>000656</Fit>
                        <LevelTag>L1</LevelTag>
                        <Triangle $ml={13} $half={15} $h={19} $color="#c8c8c8" />
                    </CodeRow>
                </TitleBlock>
                <HeaderIcons>
                    <AiIcon />
                    <ShareIcon />
                    <SearchIcon />
                </HeaderIcons>
            </Header>

            <QuotePanel />

            <PeriodTabs>
                {PERIODS.map(([name, w]) => (
                    <Period key={name} $w={w} $active={name === '日K'}>
                        {name}
                        {name === '日K' && <Underline $left={7} />}
                    </Period>
                ))}
                <Triangle $half={10} $h={16} $color={GREY} />
                <GearWrap><GearIcon /></GearWrap>
            </PeriodTabs>

            <IndicatorRow $h={84} $pad="0 0 0 16px">
                <Chip $w={176} $pl={10}>
                    <Fit w={130} size={49}>BOLL</Fit>
                    <Triangle $ml={1} $half={10} $h={15} $color={GREY} />
                </Chip>
                <Fit w={183} ml={3} size={43}>MID:1.37↑</Fit>
                <Fit w={164} size={43} color={YELLOW}>UP:1.45↑</Fit>
                <Fit w={201} size={43} color={PURPLE}>LOW:1.29↓</Fit>
                <Chip $w={164} $ml={106} $pl={13}>
                    <Fit w={110} size={45}>DK点</Fit>
                    <ChipCorner />
                </Chip>
                <Chip $w={172} $ml={39} $pl={15} $solid>
                    <Fit w={138} size={46}>不复权</Fit>
                </Chip>
            </IndicatorRow>

            <PriceChart />

            <IndicatorRow $h={86} $pad="2px 0 0 16px">
                <Chip $w={194} $pl={5}>
                    <Fit w={139} size={46}>成交量</Fit>
                    <Triangle $ml={15} $half={10} $h={16} $color={GREY} />
                </Chip>
                <Fit w={124} ml={3} size={53} squeeze>40.89万↓</Fit>
                <Fit w={171} ml={2} size={53} color={YELLOW} squeeze>MA1:147.9万↓</Fit>
                <Fit w={182} ml={2} size={53} color={PURPLE} squeeze>MA2:142.5万↓</Fit>
                <Fit w={184} ml={2} size={53} color={GREEN} squeeze>MA3:125.8万↓</Fit>
                <Fit w={254} ml={3} size={53} color="#8c8c8c" squeeze>虚拟成交量:86.48万</Fit>
            </IndicatorRow>

            <VolumeChart />
            <DateAxis />
            <SignalBanner />

            <ContentTabs>
                {['股吧', '盘口', '资讯', '公告', '研报', '财务', '资料'].map((name, i) => (
                    <ContentTab key={name} $active={i === 0}>
                        {name}
                        {i === 0 && <Underline $left={18} />}
                    </ContentTab>
                ))}
            </ContentTabs>

            <Cards>
                <Card $split={328}>
                    <CardArt width="566" height="160">
                        <path d="M388 31 H528 V160 H384 Z" fill="#fffaf6" />
                        <path d="M414 69 H500 V160 H414 Z" fill="#feeae8" />
                    </CardArt>
                    <CardIcon><RankIcon /></CardIcon>
                    <CardTitle $ml={23}><Fit w={154} size={52} weight={500}>人气榜</Fit></CardTitle>
                    <svg width="18" height="34" viewBox="0 0 18 34" fill="none" stroke="#aaa" strokeWidth="3">
                        <path d="M-1 18 L13 33 L-1 48" transform="translate(22 0)" />
                    </svg>
                </Card>
                <Card $split={290}>
                    <CardArt width="565" height="160">
                        <path d="M340 30 L390 27 L420 50 C450 20 530 20 555 70 V160 H360 Z" fill="#fffaf6" />
                        <path d="M370 56 H396 V160 H374 Z M430 160 L446 60 Q500 40 534 70 V160 Z" fill="#fff1f4" />
                    </CardArt>
                    <CardIcon>VS</CardIcon>
                    <CardTitle $ml={18}><Fit w={214} size={53} weight={500}>多空看盘</Fit></CardTitle>
                </Card>
            </Cards>

            <BottomBar>
                <IndexBlock>
                    <UpArrow />
                    <IndexRow $h={92}><Fit w={264} ml={47} size={72} color={GREEN}>14927.15</Fit></IndexRow>
                    <IndexRow $h={34}>
                        <Fit w={196} ml={10} size={39}>房地产开发</Fit>
                        <Fit w={137} ml={12} size={44} color={GREEN}>-0.79%</Fit>
                    </IndexRow>
                </IndexBlock>
                <NavItem><TradeIcon />交易</NavItem>
                <NavItem><PostIcon />发帖</NavItem>
                <NavItem><GridIcon />功能</NavItem>
                <NavItem><DotsIcon />设自选</NavItem>
            </BottomBar>

            <SystemNav>
                <svg {...systemIcon}>
                    <path d="M45 4 V43 Q45 46 42 44 L4 27 Q0 23.500 4 20 L42 3 Q45 1 45 4 Z" />
                </svg>
                <svg {...systemIcon}>
                    <rect x="1.500" y="1.500" width="44" height="44" rx="11" />
                </svg>
                <svg {...systemIcon}>
                    <path d="M0 2 H47 M0 23.500 H47 M0 45 H47" />
                </svg>
            </SystemNav>
        </Page>
    );
}
